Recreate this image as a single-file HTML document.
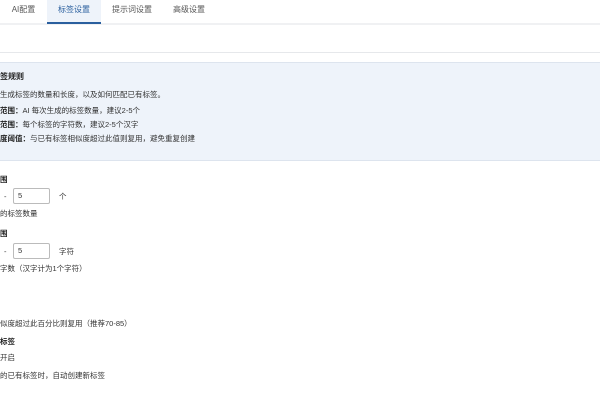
<!DOCTYPE html>
<html><head><meta charset="utf-8"><style>
body{margin:0;width:600px;height:400px;background:#fff;font-family:"Liberation Sans","Noto Sans CJK SC",sans-serif;color:#333;position:relative;overflow:hidden;font-size:7.5px}
.a{position:absolute;white-space:nowrap;line-height:1}
.tab{position:absolute;top:0;height:22px;line-height:20px;font-size:8px;color:#555;text-align:center}
b{font-weight:bold;color:#222}
.in{position:absolute;width:37px;height:16px;border:1px solid #bbb;border-radius:2px;box-sizing:border-box;font-size:7.5px;line-height:14px;padding-left:4px}
</style></head><body>
<div style="position:absolute;left:0;top:0;width:600px;height:23px;background:#fff"></div>
<div style="position:absolute;left:0;top:23px;width:600px;height:2px;background:#f0f1f3"></div>
<div class="tab" style="left:0;width:47px">AI配置</div>
<div class="tab" style="left:47px;width:54px;background:#eef3fa;color:#2a5f9e">标签设置</div>
<div style="position:absolute;left:47px;top:22px;width:54px;height:2px;background:#2a5f9e"></div>
<div class="tab" style="left:101px;width:62px">提示词设置</div>
<div class="tab" style="left:163px;width:52px">高级设置</div>
<div style="position:absolute;left:0;top:52px;width:600px;height:1px;background:#e6e8eb"></div>
<div style="position:absolute;left:0;top:62px;width:600px;height:97px;background:#eef3fa;border-top:1px solid #dde4ee;border-bottom:1px solid #dde4ee"></div>
<div class="a" style="left:0;top:73px;font-weight:bold;color:#222;font-size:8px">签规则</div>
<div class="a" style="left:0;top:91px">生成标签的数量和长度，以及如何匹配已有标签。</div>
<div class="a" style="left:0;top:107px"><b>范围：</b>AI 每次生成的标签数量，建议2-5个</div>
<div class="a" style="left:0;top:121px"><b>范围：</b>每个标签的字符数，建议2-5个汉字</div>
<div class="a" style="left:0;top:135px"><b>度阈值：</b>与已有标签相似度超过此值则复用，避免重复创建</div>
<div class="a" style="left:0;top:176px;font-weight:bold;color:#222">围</div>
<div class="a" style="left:4px;top:193px">-</div>
<div class="in" style="left:13px;top:188px">5</div>
<div class="a" style="left:59px;top:193px">个</div>
<div class="a" style="left:0;top:210px">的标签数量</div>
<div class="a" style="left:0;top:230px;font-weight:bold;color:#222">围</div>
<div class="a" style="left:4px;top:248px">-</div>
<div class="in" style="left:13px;top:243px">5</div>
<div class="a" style="left:59px;top:248px">字符</div>
<div class="a" style="left:0;top:265px">字数（汉字计为1个字符）</div>
<div class="a" style="left:0;top:320px">似度超过此百分比则复用（推荐70-85）</div>
<div class="a" style="left:0;top:338px;font-weight:bold;color:#222">标签</div>
<div class="a" style="left:0;top:354px">开启</div>
<div class="a" style="left:0;top:372px">的已有标签时，自动创建新标签</div>
</body></html>
